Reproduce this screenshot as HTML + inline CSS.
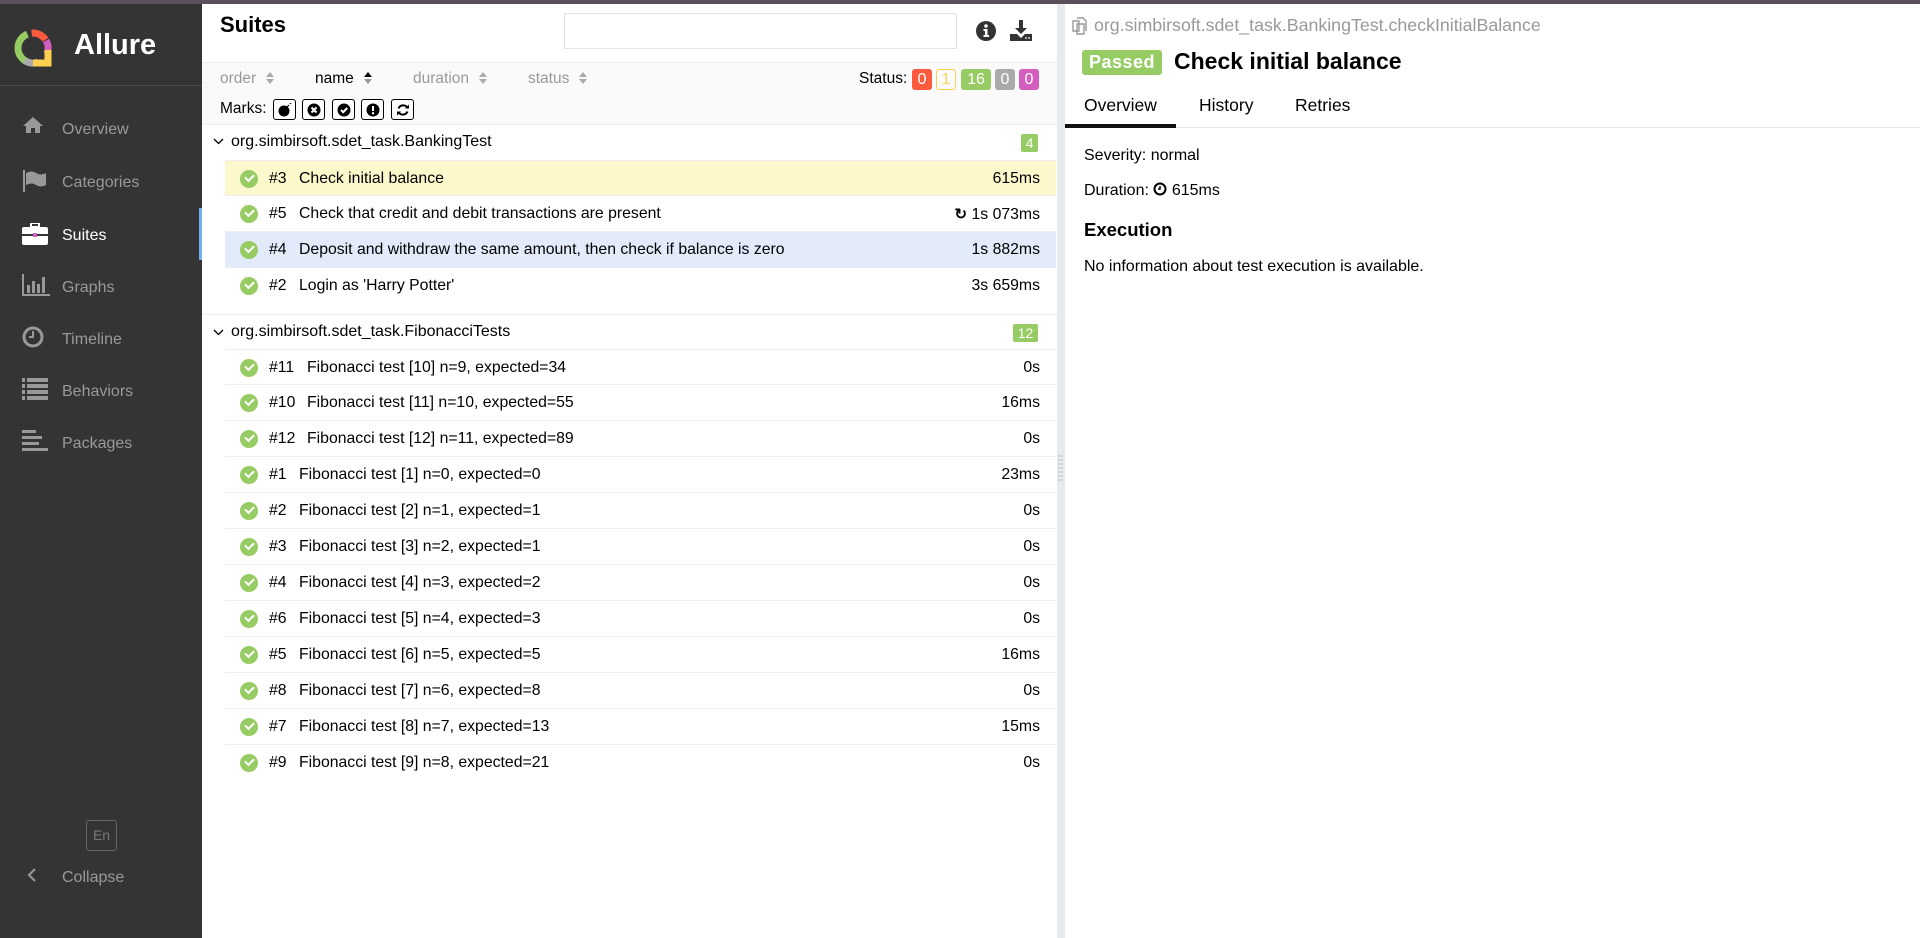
<!DOCTYPE html>
<html><head><meta charset="utf-8"><style>
*{box-sizing:border-box;margin:0;padding:0}
body{width:1920px;height:938px;overflow:hidden;font-family:"Liberation Sans",Arial,sans-serif;background:#fff;position:relative;color:#000}
.top{position:absolute;left:0;top:0;width:1920px;height:4px;background:#5c4f5c}
.side{position:absolute;left:0;top:4px;width:202px;height:934px;background:#343434}
.logo-t{position:absolute;left:74px;top:25px;color:#fff;font-weight:bold;font-size:29px}
.sdiv{position:absolute;left:0;top:81px;width:202px;height:1px;background:#4a4a4a}
.mi{position:absolute;left:62px;font-size:16px;color:#999}
.ic{position:absolute;left:22px}
.a{position:absolute}
.main{position:absolute;left:202px;top:4px;width:855px;height:934px}
.split{position:absolute;left:1057px;top:4px;width:8px;height:934px;background:#e8ebee}
.sort{position:absolute;top:66px;font-size:15.5px;color:#999}
.arr{display:inline-block;margin-left:10px;vertical-align:middle;width:8px;height:14px;position:relative;top:-1px}
.badge{position:absolute;top:65px;height:21px;border-radius:3px;color:#fff;font-size:16px;text-align:center;line-height:21px}
.mk{position:absolute;top:95px;width:23px;height:21px;border:1px solid #000;border-radius:3px;background:#fff}
.mk svg{position:absolute;left:4px;top:3px}
.grp{position:absolute;left:231px;font-size:16px}
.cnt{position:absolute;height:18px;background:#97cc64;color:#fff;font-size:14px;text-align:center;line-height:18px;border-radius:2px}
.row{position:absolute;left:225px;width:831px;height:36px;border-bottom:1px solid #eee;font-size:15.8px}
.row .ok{position:absolute;left:15px;top:9px;width:18px;height:18px;border-radius:50%;background:#97cc64}
.row .ok:after{content:"";position:absolute;left:5px;top:4px;width:7px;height:4px;border-left:2.5px solid #fff;border-bottom:2.5px solid #fff;transform:rotate(-45deg)}
.row .n{position:absolute;left:44px;top:9px}
.row .t{position:absolute;top:9px}
.row .d{position:absolute;right:16px;top:9px}
</style></head><body>
<div class="top"></div>
<div class="side">
 <svg class="a" style="left:13px;top:24px" width="42" height="42" viewBox="0 0 42 42">
  <circle cx="20" cy="20" r="15" fill="none" stroke="#97cc64" stroke-width="7" stroke-dasharray="40 200" transform="rotate(95 20 20)"/>
  <circle cx="20" cy="20" r="15" fill="none" stroke="#fd5a3e" stroke-width="7" stroke-dasharray="16 200" transform="rotate(-95 20 20)"/>
  <circle cx="20" cy="20" r="15" fill="none" stroke="#d35ebe" stroke-width="7" stroke-dasharray="14 200" transform="rotate(-30 20 20)"/>
  <circle cx="20" cy="20" r="15" fill="none" stroke="#aaa" stroke-width="7" stroke-dasharray="14 200" transform="rotate(70 20 20)"/>
  <path d="M20 35 H35 V22" fill="none" stroke="#ffd050" stroke-width="7"/>
 </svg>
 <div class="logo-t">Allure</div>
 <div class="sdiv"></div>
 <svg class="ic" style="top:112px" width="22" height="18" viewBox="0 0 22 18"><path d="M11 1 L1 10 H4 V17 H9 V12 H13 V17 H18 V10 H21 Z" fill="#999"/></svg>
 <div class="mi" style="top:117px">Overview</div>
 <svg class="ic" style="top:166px" width="26" height="22" viewBox="0 0 26 22"><rect x="1" y="0" width="2" height="22" fill="#999"/><path d="M4 3 Q10 0 14 3 Q19 6 24 3 V15 Q19 18 14 15 Q10 12 4 15 Z" fill="#999"/></svg>
 <div class="mi" style="top:170px">Categories</div>
 <svg class="ic" style="top:219px" width="26" height="22" viewBox="0 0 26 22"><rect x="9" y="0" width="8" height="4" fill="none" stroke="#fff" stroke-width="2"/><rect x="0" y="4" width="26" height="18" rx="2" fill="#fff"/><rect x="0" y="11" width="26" height="2" fill="#343434"/><rect x="11" y="10" width="4" height="4" fill="#d35ebe"/></svg>
 <div class="mi" style="top:223px;color:#fff">Suites</div>
 <div class="a" style="left:199px;top:204px;width:3px;height:52px;background:#6eb0f0"></div>
 <svg class="ic" style="top:270px" width="28" height="22" viewBox="0 0 28 22"><path d="M1 0 V21 H28" fill="none" stroke="#999" stroke-width="2"/><rect x="5" y="11" width="3" height="8" fill="#999"/><rect x="10" y="7" width="3" height="12" fill="#999"/><rect x="15" y="10" width="3" height="9" fill="#999"/><rect x="20" y="3" width="3" height="16" fill="#999"/></svg>
 <div class="mi" style="top:275px">Graphs</div>
 <svg class="ic" style="top:322px" width="22" height="22" viewBox="0 0 22 22"><circle cx="11" cy="11" r="9" fill="none" stroke="#999" stroke-width="3"/><path d="M11 5 V11 H7" fill="none" stroke="#999" stroke-width="2"/></svg>
 <div class="mi" style="top:327px">Timeline</div>
 <svg class="ic" style="top:374px" width="26" height="22" viewBox="0 0 26 22"><g fill="#999"><rect x="0" y="0" width="3" height="4"/><rect x="5" y="0" width="21" height="4"/><rect x="0" y="6" width="3" height="4"/><rect x="5" y="6" width="21" height="4"/><rect x="0" y="12" width="3" height="4"/><rect x="5" y="12" width="21" height="4"/><rect x="0" y="18" width="3" height="4"/><rect x="5" y="18" width="21" height="4"/></g></svg>
 <div class="mi" style="top:379px">Behaviors</div>
 <svg class="ic" style="top:426px" width="26" height="22" viewBox="0 0 26 22"><g fill="#999"><rect x="0" y="0" width="14" height="3"/><rect x="0" y="6" width="20" height="3"/><rect x="0" y="12" width="17" height="3"/><rect x="0" y="18" width="26" height="3"/></g></svg>
 <div class="mi" style="top:431px">Packages</div>
 <div class="a" style="left:86px;top:816px;width:31px;height:31px;border:1px solid #666;border-radius:3px;color:#777;font-size:14px;text-align:center;line-height:29px">En</div>
 <svg class="a" style="left:27px;top:863px" width="10" height="16" viewBox="0 0 10 16"><path d="M8 2 L2 8 L8 14" fill="none" stroke="#999" stroke-width="2"/></svg>
 <div class="mi" style="top:865px">Collapse</div>
</div>

<div class="main">
 <div class="a" style="left:18px;top:8px;font-size:22px;font-weight:bold">Suites</div>
 <div class="a" style="left:362px;top:9px;width:393px;height:36px;border:1px solid #e3e3e3"></div>
 <svg class="a" style="left:773px;top:16px" width="22" height="22" viewBox="0 0 22 22"><circle cx="11" cy="11" r="10" fill="#333"/><circle cx="11" cy="6" r="1.8" fill="#fff"/><path d="M8.5 9 H12.5 V15 H14 V17 H8.5 V15 H10 V11 H8.5 Z" fill="#fff"/></svg>
 <svg class="a" style="left:807px;top:15px" width="24" height="24" viewBox="0 0 24 24"><path d="M10 1 H14 V9 H18 L12 15 L6 9 H10 Z" fill="#333"/><path d="M1 15 H8 L12 19 L16 15 H23 V22 H1 Z" fill="#333"/><circle cx="17" cy="19" r="0.9" fill="#fff"/><circle cx="20" cy="19" r="0.9" fill="#fff"/></svg>
 <div class="a" style="left:0;top:58px;width:855px;height:63px;background:#fafafa;border-top:1px solid #eee;border-bottom:1px solid #eee"></div>
 <div class="sort" style="left:18px">order<svg class="arr" viewBox="0 0 8 14"><path d="M0 6 L4 1 L8 6Z M0 8 L4 13 L8 8Z" fill="#aaa"/></svg></div>
 <div class="sort" style="left:113px;color:#000">name<svg class="arr" viewBox="0 0 8 14"><path d="M0 6 L4 1 L8 6Z" fill="#000"/><path d="M0 8 L4 13 L8 8Z" fill="#999"/></svg></div>
 <div class="sort" style="left:211px">duration<svg class="arr" viewBox="0 0 8 14"><path d="M0 6 L4 1 L8 6Z M0 8 L4 13 L8 8Z" fill="#aaa"/></svg></div>
 <div class="sort" style="left:326px">status<svg class="arr" viewBox="0 0 8 14"><path d="M0 6 L4 1 L8 6Z M0 8 L4 13 L8 8Z" fill="#aaa"/></svg></div>
 <div class="a" style="left:657px;top:66px;font-size:15.5px">Status:</div>
 <div class="badge" style="left:710px;width:20px;background:#fd5a3e">0</div>
 <div class="badge" style="left:734px;width:20px;border:1px solid #ffd050;color:#ffd050;line-height:19px">1</div>
 <div class="badge" style="left:759px;width:30px;background:#97cc64">16</div>
 <div class="badge" style="left:793px;width:20px;background:#aaa">0</div>
 <div class="badge" style="left:817px;width:20px;background:#d35ebe">0</div>
 <div class="a" style="left:18px;top:96px;font-size:15.5px">Marks:</div>
 <div class="mk" style="left:71px"><svg width="14" height="14" viewBox="0 0 14 14"><circle cx="6" cy="8" r="5.5" fill="#000"/><path d="M9 4 L11 2 M12 1 L13 0" stroke="#000" stroke-width="1.2"/></svg></div>
 <div class="mk" style="left:100px"><svg width="14" height="14" viewBox="0 0 14 14"><circle cx="7" cy="7" r="6.5" fill="#000"/><path d="M4.5 4.5 L9.5 9.5 M9.5 4.5 L4.5 9.5" stroke="#fff" stroke-width="2"/></svg></div>
 <div class="mk" style="left:130px"><svg width="14" height="14" viewBox="0 0 14 14"><circle cx="7" cy="7" r="6.5" fill="#000"/><path d="M4 7 L6.2 9.2 L10.2 5" fill="none" stroke="#fff" stroke-width="2"/></svg></div>
 <div class="mk" style="left:159px"><svg width="14" height="14" viewBox="0 0 14 14"><circle cx="7" cy="7" r="6.5" fill="#000"/><rect x="6" y="3" width="2" height="5" fill="#fff"/><rect x="6" y="9.2" width="2" height="2" fill="#fff"/></svg></div>
 <div class="mk" style="left:189px"><svg width="14" height="14" viewBox="0 0 14 14"><path d="M11.5 5 A5 5 0 0 0 2.5 5.5 M2.5 9 A5 5 0 0 0 11.5 8.5" fill="none" stroke="#000" stroke-width="2"/><path d="M9 5.5 H13 V1.5 Z M5 8.5 H1 V12.5 Z" fill="#000"/></svg></div>
</div>

<svg class="a" style="left:213px;top:137px" width="11" height="8" viewBox="0 0 11 8"><path d="M1 2 L5.5 6.5 L10 2" fill="none" stroke="#000" stroke-width="1.3"/></svg>
<div class="grp" style="top:133px">org.simbirsoft.sdet_task.BankingTest</div>
<div class="cnt" style="left:1021px;top:134px;width:17px">4</div>

<div class="row" style="top:160px;background:#fdf8cc;border-top:1px solid #eee"><span class="ok"></span><span class="n">#3</span><span class="t" style="left:74px">Check initial balance</span><span class="d">615ms</span></div>
<div class="row" style="top:196px"><span class="ok"></span><span class="n">#5</span><span class="t" style="left:74px">Check that credit and debit transactions are present</span><span class="d"><b style="font-size:15px">&#x21bb;</b> 1s 073ms</span></div>
<div class="row" style="top:232px;background:#e3ebfa"><span class="ok"></span><span class="n">#4</span><span class="t" style="left:74px">Deposit and withdraw the same amount, then check if balance is zero</span><span class="d">1s 882ms</span></div>
<div class="row" style="top:268px;border-bottom:none"><span class="ok"></span><span class="n">#2</span><span class="t" style="left:74px">Login as 'Harry Potter'</span><span class="d">3s 659ms</span></div>
<div class="a" style="left:202px;top:314px;width:855px;height:1px;background:#eee"></div>

<svg class="a" style="left:213px;top:328px" width="11" height="8" viewBox="0 0 11 8"><path d="M1 2 L5.5 6.5 L10 2" fill="none" stroke="#000" stroke-width="1.3"/></svg>
<div class="grp" style="top:323px">org.simbirsoft.sdet_task.FibonacciTests</div>
<div class="cnt" style="left:1013px;top:324px;width:25px">12</div>

<div class="row" style="top:349px;border-top:1px solid #eee"><span class="ok"></span><span class="n">#11</span><span class="t" style="left:82px">Fibonacci test [10] n=9, expected=34</span><span class="d">0s</span></div>
<div class="row" style="top:385px"><span class="ok"></span><span class="n">#10</span><span class="t" style="left:82px">Fibonacci test [11] n=10, expected=55</span><span class="d">16ms</span></div>
<div class="row" style="top:421px"><span class="ok"></span><span class="n">#12</span><span class="t" style="left:82px">Fibonacci test [12] n=11, expected=89</span><span class="d">0s</span></div>
<div class="row" style="top:457px"><span class="ok"></span><span class="n">#1</span><span class="t" style="left:74px">Fibonacci test [1] n=0, expected=0</span><span class="d">23ms</span></div>
<div class="row" style="top:493px"><span class="ok"></span><span class="n">#2</span><span class="t" style="left:74px">Fibonacci test [2] n=1, expected=1</span><span class="d">0s</span></div>
<div class="row" style="top:529px"><span class="ok"></span><span class="n">#3</span><span class="t" style="left:74px">Fibonacci test [3] n=2, expected=1</span><span class="d">0s</span></div>
<div class="row" style="top:565px"><span class="ok"></span><span class="n">#4</span><span class="t" style="left:74px">Fibonacci test [4] n=3, expected=2</span><span class="d">0s</span></div>
<div class="row" style="top:601px"><span class="ok"></span><span class="n">#6</span><span class="t" style="left:74px">Fibonacci test [5] n=4, expected=3</span><span class="d">0s</span></div>
<div class="row" style="top:637px"><span class="ok"></span><span class="n">#5</span><span class="t" style="left:74px">Fibonacci test [6] n=5, expected=5</span><span class="d">16ms</span></div>
<div class="row" style="top:673px"><span class="ok"></span><span class="n">#8</span><span class="t" style="left:74px">Fibonacci test [7] n=6, expected=8</span><span class="d">0s</span></div>
<div class="row" style="top:709px"><span class="ok"></span><span class="n">#7</span><span class="t" style="left:74px">Fibonacci test [8] n=7, expected=13</span><span class="d">15ms</span></div>
<div class="row" style="top:745px;border-bottom:none"><span class="ok"></span><span class="n">#9</span><span class="t" style="left:74px">Fibonacci test [9] n=8, expected=21</span><span class="d">0s</span></div>

<div class="split"></div>
<svg class="a" style="left:1058px;top:455px" width="6" height="30" viewBox="0 0 6 30"><g fill="#ccc"><rect x="0" y="0" width="2" height="2"/><rect x="3" y="0" width="2" height="2"/><rect x="0" y="4" width="2" height="2"/><rect x="3" y="4" width="2" height="2"/><rect x="0" y="8" width="2" height="2"/><rect x="3" y="8" width="2" height="2"/><rect x="0" y="12" width="2" height="2"/><rect x="3" y="12" width="2" height="2"/><rect x="0" y="16" width="2" height="2"/><rect x="3" y="16" width="2" height="2"/><rect x="0" y="20" width="2" height="2"/><rect x="3" y="20" width="2" height="2"/><rect x="0" y="24" width="2" height="2"/><rect x="3" y="24" width="2" height="2"/></g></svg>

<svg class="a" style="left:1071px;top:17px" width="18" height="18" viewBox="0 0 18 18"><path d="M2 4 H8 V14 H2 Z M6 1 H12 L15 4 V14" fill="none" stroke="#999" stroke-width="1.4"/><path d="M6 7 H13 V17 H6 Z" fill="none" stroke="#999" stroke-width="1.4"/></svg>
<div class="a" style="left:1094px;top:15px;font-size:17.8px;color:#999">org.simbirsoft.sdet_task.BankingTest.checkInitialBalance</div>
<div class="a" style="left:1082px;top:50px;width:80px;height:25px;background:#97cc64;border-radius:3px;color:#fff;font-weight:bold;font-size:18px;text-align:center;line-height:25px;letter-spacing:0.5px">Passed</div>
<div class="a" style="left:1174px;top:48px;font-size:23px;font-weight:bold">Check initial balance</div>
<div class="a" style="left:1084px;top:95px;font-size:17.5px">Overview</div>
<div class="a" style="left:1199px;top:95px;font-size:17.5px">History</div>
<div class="a" style="left:1295px;top:95px;font-size:17.5px">Retries</div>
<div class="a" style="left:1065px;top:127px;width:855px;height:1px;background:#e3e3e3"></div>
<div class="a" style="left:1065px;top:124px;width:111px;height:4px;background:#111"></div>
<div class="a" style="left:1084px;top:147px;font-size:16px">Severity: normal</div>
<div class="a" style="left:1084px;top:182px;font-size:16px">Duration: <svg width="14" height="14" viewBox="0 0 14 14" style="vertical-align:-1px"><circle cx="7" cy="7" r="5.5" fill="none" stroke="#000" stroke-width="2"/><path d="M7 4 V7 H5" fill="none" stroke="#000" stroke-width="1.5"/></svg> 615ms</div>
<div class="a" style="left:1084px;top:219px;font-size:18.5px;font-weight:bold">Execution</div>
<div class="a" style="left:1084px;top:258px;font-size:16px">No information about test execution is available.</div>
</body></html>
